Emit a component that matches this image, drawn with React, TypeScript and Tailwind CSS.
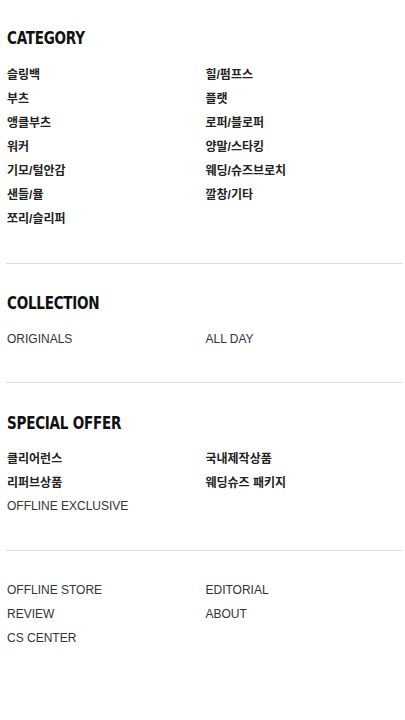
import React from "react";

const KO = "font-['Liberation_Sans','Noto_Sans_CJK_KR',sans-serif]";

function Heading({ children }: { children: React.ReactNode }) {
  return (
    <h2 className="font-['DejaVu_Sans',sans-serif] [font-stretch:condensed] font-bold text-[17.5px] leading-[24px] text-[#111] tracking-[-0.3px] pl-px">
      <span className="inline-block origin-left scale-x-[0.86] whitespace-nowrap">{children}</span>
    </h2>
  );
}

function Items({ items }: { items: { t: string; ko?: boolean }[] }) {
  return (
    <ul className="grid grid-cols-2">
      {items.map((it, i) => (
        <li
          key={i}
          className={`${KO} text-[12px] leading-[24px] pl-px ${
            it.ko ? "font-bold text-[#222] pt-[1px] -mb-[1px]" : "text-[#333]"
          }`}
        >
          {it.t}
        </li>
      ))}
    </ul>
  );
}

const k = (t: string) => ({ t, ko: true });
const e = (t: string) => ({ t });

export default function App() {
  return (
    <div className="w-[405px] min-h-[720px] bg-white pl-[6px] pr-[2px]">
      <section className="pt-[26px] pb-[33px]">
        <Heading>CATEGORY</Heading>
        <div className="mt-[12px]">
          <Items
            items={[
              k("슬링백"),
              k("힐/펌프스"),
              k("부츠"),
              k("플랫"),
              k("앵클부츠"),
              k("로퍼/블로퍼"),
              k("워커"),
              k("양말/스타킹"),
              k("기모/털안감"),
              k("웨딩/슈즈브로치"),
              k("샌들/뮬"),
              k("깔창/기타"),
              k("쪼리/슬리퍼"),
            ]}
          />
        </div>
      </section>
      <div className="h-px bg-[#dddddd]" />
      <section className="pt-[27px] pb-[31px]">
        <Heading>COLLECTION</Heading>
        <div className="mt-[12px]">
          <Items items={[e("ORIGINALS"), e("ALL DAY")]} />
        </div>
      </section>
      <div className="h-px bg-[#dddddd]" />
      <section className="pt-[28px] pb-[32px]">
        <Heading>SPECIAL OFFER</Heading>
        <div className="mt-[11px]">
          <Items
            items={[
              k("클리어런스"),
              k("국내제작상품"),
              k("리퍼브상품"),
              k("웨딩슈즈 패키지"),
              e("OFFLINE EXCLUSIVE"),
            ]}
          />
        </div>
      </section>
      <div className="h-px bg-[#dddddd]" />
      <section className="pt-[27px] pb-[40px]">
        <Items
          items={[
            e("OFFLINE STORE"),
            e("EDITORIAL"),
            e("REVIEW"),
            e("ABOUT"),
            e("CS CENTER"),
          ]}
        />
      </section>
    </div>
  );
}
